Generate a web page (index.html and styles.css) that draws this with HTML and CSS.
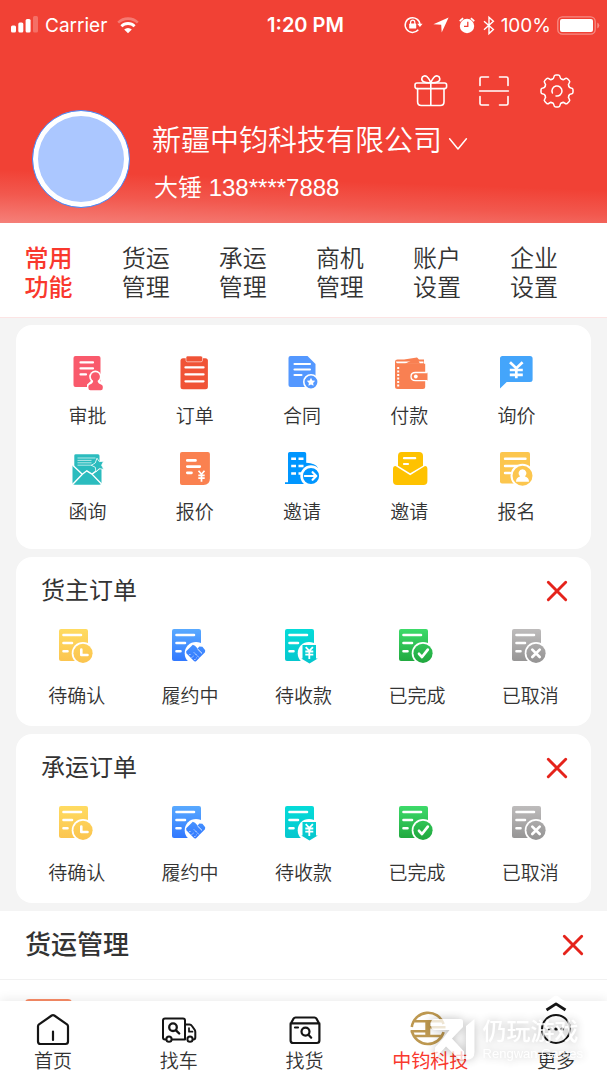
FILE: index.html
```html
<!DOCTYPE html>
<html lang="zh-CN">
<head>
<meta charset="utf-8">
<meta name="viewport" content="width=device-width, initial-scale=1">
<title>中钧科技</title>
<link rel="stylesheet" href="styles.css">
</head>
<body>
<svg class="sprite" aria-hidden="true">
  <defs>
    <linearGradient id="g-yellow" x1="0" y1="0" x2="0" y2="36" gradientUnits="userSpaceOnUse"><stop offset="0" stop-color="#ffdc62"/><stop offset="1" stop-color="#fbc34e"/></linearGradient>
    <linearGradient id="g-blue" x1="0" y1="0" x2="0" y2="36" gradientUnits="userSpaceOnUse"><stop offset="0" stop-color="#5aabff"/><stop offset="1" stop-color="#2e74ff"/></linearGradient>
    <linearGradient id="g-teal" x1="0" y1="0" x2="0" y2="36" gradientUnits="userSpaceOnUse"><stop offset="0" stop-color="#05dcd9"/><stop offset="1" stop-color="#06c5cd"/></linearGradient>
    <linearGradient id="g-green" x1="0" y1="0" x2="0" y2="36" gradientUnits="userSpaceOnUse"><stop offset="0" stop-color="#3edc6b"/><stop offset="1" stop-color="#1fa53c"/></linearGradient>
    <linearGradient id="g-gray" x1="0" y1="0" x2="0" y2="36" gradientUnits="userSpaceOnUse"><stop offset="0" stop-color="#bfbdbd"/><stop offset="1" stop-color="#939292"/></linearGradient>
  </defs>
  <symbol id="sheet" viewBox="1 0 36 36" overflow="visible">
    <rect x="1" y="1" width="29" height="32" rx="2"/>
    <path d="M5.5 7H23M5.5 15H14M5.5 23.3H9.5" stroke="#fff" stroke-width="2.6" stroke-linecap="round"/>
    <circle cx="25" cy="25.3" r="11.3" fill="#fff"/>
  </symbol>
  <symbol id="o-confirm" viewBox="1 0 36 36" overflow="visible">
    <g fill="url(#g-yellow)"><use href="#sheet" x="1" width="36" height="36"/><circle cx="25" cy="25.3" r="9.6"/></g>
    <path d="M23.3 21.5V27H29.5" fill="none" stroke="#fff" stroke-width="2.6" stroke-linecap="round" stroke-linejoin="round"/>
  </symbol>
  <symbol id="o-progress" viewBox="1 0 36 36" overflow="visible">
    <g fill="url(#g-blue)"><use href="#sheet" x="1" width="36" height="36"/>
    <path d="M15.2 23.3 21.8 16.8 24 17.8 26.6 20.6 28.4 18.6 31.4 18.8 34.2 22.3 34 24.3 24.8 33.6 23.2 33.3 15.3 25.2Z"/></g>
    <path d="M26.4 20.8 31 25.4" fill="none" stroke="#fff" stroke-width=".9"/>
    <path d="M18.3 27.1 19.7 25.7M20.8 29.6 22.6 27.8M23.3 32.1 25.5 29.9M23 24.5 28 29.5" fill="none" stroke="#fff" stroke-width=".9" stroke-dasharray="1.5 .7"/>
  </symbol>
  <symbol id="o-collect" viewBox="1 0 36 36" overflow="visible">
    <g fill="url(#g-teal)"><use href="#sheet" x="1" width="36" height="36"/>
    <path d="M18.5 17H32V30.5H33.8L25.5 35.5 17.2 30.5H18.5Z"/></g>
    <path d="M21.7 19.2 25.3 22.8 28.9 19.2M21.3 23.5H29.3M21.3 26.7H29.3M25.3 22.8V31" fill="none" stroke="#fff" stroke-width="1.8"/>
  </symbol>
  <symbol id="o-done" viewBox="1 0 36 36" overflow="visible">
    <g fill="url(#g-green)"><use href="#sheet" x="1" width="36" height="36"/><circle cx="25" cy="25.3" r="9.6"/></g>
    <path d="M21 25.8 24 29 29.8 21.6" fill="none" stroke="#fff" stroke-width="2.7" stroke-linecap="round" stroke-linejoin="round"/>
  </symbol>
  <symbol id="o-cancel" viewBox="1 0 36 36" overflow="visible">
    <g fill="url(#g-gray)"><use href="#sheet" x="1" width="36" height="36"/><circle cx="25" cy="25.3" r="9.6"/></g>
    <path d="M21.3 21.6 28.7 29M28.7 21.6 21.3 29" fill="none" stroke="#fff" stroke-width="2.7" stroke-linecap="round"/>
  </symbol>
  <symbol id="cross" viewBox="0 0 22 22">
    <path d="M2.3 2.3 19.7 19.7M19.7 2.3 2.3 19.7" fill="none" stroke="#e5231b" stroke-width="2.9" stroke-linecap="round"/>
  </symbol>
</svg>

<div class="app">
  <main class="scroll">
    <header class="hero">
      <div class="status">
        <div class="status-side">
          <svg class="ic-signal" viewBox="0 0 28 18" fill="#fff"><rect x="0" y="9.5" width="5" height="7" rx="1.5"/><rect x="7.3" y="6.5" width="5" height="10" rx="1.5"/><rect x="14.6" y="3" width="5" height="13.5" rx="1.5"/><rect x="22" y="0" width="5" height="16.5" rx="1.5" opacity=".25"/></svg>
          <span>Carrier</span>
          <svg class="ic-wifi" viewBox="0 0 22 17" fill="none" stroke="#fff"><path d="M1.2 5.6A14 14 0 0 1 20.8 5.6" stroke-width="2.6" opacity=".3"/><path d="M4.4 9.2A9.4 9.4 0 0 1 17.6 9.2" stroke-width="2.8"/><path d="M11 16.2 7.2 12.6A5.4 5.4 0 0 1 14.8 12.6Z" fill="#fff" stroke="none"/></svg>
        </div>
        <strong class="clock">1:20 PM</strong>
        <div class="status-side status-right">
          <svg class="ic-lock" viewBox="0 0 19 18" fill="none" stroke="#fff" stroke-width="1.5"><path d="M14.3 13.8A7.4 7.4 0 1 1 16 9"/><path d="M13.2 7.8H18.6L15.9 11Z" fill="#fff" stroke="none"/><rect x="5.2" y="7.6" width="7" height="5" rx=".6" fill="#fff" stroke="none"/><path d="M6.6 8V6.3A2.1 2.1 0 0 1 10.8 6.3V8" stroke-width="1.2"/></svg>
          <svg class="ic-loc" viewBox="0 0 16 16"><path d="M15.6.4 8.7 15.4 8.2 7.8.4 7.3Z" fill="#fff"/></svg>
          <svg class="ic-alarm" viewBox="0 0 16 17"><circle cx="8" cy="9" r="7.2" fill="#fff"/><path d="M.8 4.2A11 11 0 0 1 4.2 1.2M15.2 4.2A11 11 0 0 0 11.8 1.2" stroke="#fff" stroke-width="1.7" fill="none"/><path d="M8.8 4.8V9.4H5" stroke="#f14135" stroke-width="1.3" fill="none"/></svg>
          <svg class="ic-bt" viewBox="0 0 12 19"><path d="M1 5.2 10.4 13.6 6 17.6V1.3L10.4 5.3 1 13.8" fill="none" stroke="#fff" stroke-width="1.4"/></svg>
          <span>100%</span>
          <svg class="ic-battery" viewBox="0 0 43 19"><rect x=".8" y=".8" width="37.4" height="17.4" rx="4.6" fill="none" stroke="#fff" stroke-width="1.3" opacity=".4"/><rect x="3" y="3" width="33" height="13" rx="2" fill="#fff"/><path d="M40.3 6.5Q42.3 7.5 42.3 9.5T40.3 12.5Z" fill="#fff" opacity=".4"/></svg>
        </div>
      </div>

      <div class="tools">
        <button class="tool" type="button" aria-label="礼物"><svg viewBox="0 0 34 34" fill="none" stroke="#fff" stroke-width="1.6" stroke-linejoin="round" stroke-linecap="round"><rect x="1" y="9" width="31.6" height="5.6" rx="2"/><path d="M3.6 14.6V27.8Q3.6 31.5 7.3 31.5H26.3Q30 31.5 30 27.8V14.6M16.8 9V31.5M16.8 8.6C11.8 9.2 7.3 7.6 7.8 4.6 8.1 1.7 11.7 1 13.6 3.3 15.1 5 16.2 7 16.8 8.6ZM16.8 8.6C21.8 9.2 26.3 7.6 25.8 4.6 25.5 1.7 21.9 1 20 3.3 18.5 5 17.4 7 16.8 8.6Z"/></svg></button>
        <button class="tool" type="button" aria-label="扫一扫"><svg viewBox="0 0 34 34" fill="none" stroke="#fff" stroke-width="1.6" stroke-linecap="round" stroke-linejoin="round"><path d="M3 11.5V4.5Q3 3 4.5 3H11.5M22.5 3H29.5Q31 3 31 4.5V11.5M3 22.5V29.5Q3 31 4.5 31H11.5M22.5 31H29.5Q31 31 31 29.5V22.5M2.6 17H31.4"/></svg></button>
        <button class="tool" type="button" aria-label="设置"><svg viewBox="0 0 34 34" fill="none" stroke="#fff" stroke-width="1.5" stroke-linejoin="round" stroke-linecap="round"><path id="tooth" d="M12.1 5.2Q13.7 5 13.9 3 14.1 1 15.8 1H18.2Q19.9 1 20.1 3 20.3 5 21.9 5.2"/><use href="#tooth" transform="rotate(45 17 17)"/><use href="#tooth" transform="rotate(90 17 17)"/><use href="#tooth" transform="rotate(135 17 17)"/><use href="#tooth" transform="rotate(180 17 17)"/><use href="#tooth" transform="rotate(225 17 17)"/><use href="#tooth" transform="rotate(270 17 17)"/><use href="#tooth" transform="rotate(315 17 17)"/><path d="M12.4 19A5 5 0 1 1 16 21.9"/></svg></button>
      </div>

      <div class="profile">
        <div class="avatar"></div>
        <div class="who">
          <button class="company" type="button">新疆中钧科技有限公司<svg viewBox="0 0 20 14" fill="none" stroke="#fff" stroke-width="1.5" stroke-linecap="round" stroke-linejoin="round"><path d="M1.6 1.8 10 12 18.4 1.8"/></svg></button>
          <p class="phone">大锤 138****7888</p>
        </div>
      </div>
    </header>

    <nav class="tabs">
      <a class="tab active" href="#">常用<br>功能</a>
      <a class="tab" href="#">货运<br>管理</a>
      <a class="tab" href="#">承运<br>管理</a>
      <a class="tab" href="#">商机<br>管理</a>
      <a class="tab" href="#">账户<br>设置</a>
      <a class="tab" href="#">企业<br>设置</a>
    </nav>

    <div class="cards">
      <section class="card features">
        <a class="item" href="#"><svg viewBox="0 0 36 36"><rect x="3.5" y="1" width="27" height="31" rx="2" fill="#f95a6c"/><path d="M10.5 7.4H23M10.5 13.4H23M10.5 19.4H16" stroke="#fff" stroke-width="2.2" stroke-linecap="round"/><g fill="#fff"><circle cx="25.4" cy="21.8" r="6.2"/><path d="M22 25 17 29.5V36H34V29.5L29 25Z"/></g><g fill="#f95a6c"><circle cx="25.4" cy="21.8" r="4.5"/><path d="M23.3 24H27.5C27.3 26.5 28 28.5 30.5 29.2 32 29.6 32.8 30.6 32.8 32V33Q32.8 35.2 30.8 35.2H20.4Q18.4 35.2 18.4 33V32C18.4 30.6 19 29.6 20.5 29.2 22.8 28.5 23.5 26.5 23.3 24Z"/></g></svg>审批</a>
        <a class="item" href="#"><svg viewBox="0 0 36 36"><rect x="3.5" y="3.3" width="27.4" height="31" rx="2.5" fill="#f05336"/><rect x="9" y="1" width="16.5" height="5.8" rx="1.5" fill="#f05336" stroke="#fff" stroke-opacity=".7" stroke-width=".8"/><path d="M8.5 12.4H26.5M8.5 19.4H26.5M8.5 26.3H26.5" stroke="#fff" stroke-width="2.3" stroke-linecap="round"/></svg>订单</a>
        <a class="item" href="#"><svg viewBox="0 0 36 36"><path d="M6.5 1H23.5L31.5 9V32H6.5Q4.5 32 4.5 30V3Q4.5 1 6.5 1Z" fill="#5498ff"/><path d="M10.5 9H26M10.5 14.5H26M10.5 20H17.5" stroke="#fff" stroke-width="2.1" stroke-linecap="round"/><circle cx="27" cy="27" r="7.2" fill="#5498ff" stroke="#fff" stroke-width="1.6"/><path d="M27 22.8 28.3 25.4 31.2 25.8 29.1 27.9 29.6 30.8 27 29.4 24.4 30.8 24.9 27.9 22.8 25.8 25.7 25.4Z" fill="#fff"/></svg>合同</a>
        <a class="item" href="#"><svg viewBox="0 0 36 36"><path d="M4 6.8Q4 4.6 6.5 4.6H13L26 2.6 28 4.6H33V8.8H34.2V32Q34.2 34 32 34H6.5Q4 34 4 31.5Z" fill="#f98052"/><path d="M5 6.6H32.5V8.2H6.3Q5 8.2 5 6.6Z" fill="#fff"/><path d="M14 8.8 26 2.8 29 8.8Z" fill="#f98052"/><path d="M7.2 12V31.5" stroke="#fff" stroke-width="2" stroke-dasharray="2 1.5"/><path d="M36.5 17.5H24.5Q20 17.5 20 21.5T24.5 25.7H36.5" fill="#f98052" stroke="#fff" stroke-width="1.3"/><circle cx="24.8" cy="21.5" r="1.9" fill="#fff"/></svg>付款</a>
        <a class="item" href="#"><svg viewBox="0 0 36 36"><path d="M4.5 1H32Q34.6 1 34.6 3.5V24.5Q34.6 27 32 27H8.7L2 33.6V3.5Q2 1 4.5 1Z" fill="#44a5fb"/><path d="M12 7.2 18.3 13.2 24.6 7.2M11.8 15H24.8M11.8 19.8H24.8M18.3 13V23.2" fill="none" stroke="#fff" stroke-width="2.7"/></svg>询价</a>
        <a class="item" href="#"><svg viewBox="0 0 36 36"><path d="M4.3 4.5Q4.3 3.2 5.8 3.2H28Q29.5 3.2 29.5 4.7V16L31.5 15V31.7Q31.5 33.8 29.3 33.8H4.7Q2.5 33.8 2.5 31.7V14L4.3 15.7Z" fill="#2bbcbe"/><path d="M7.5 7H25.5M7.5 9.4H21.5M7.5 11.8H21.5M7.5 14.2H23.5" stroke="#fff" stroke-opacity=".65" stroke-width="1"/><path d="M2.5 14 12.3 23.2 3 33M31.5 16 22 23.2 31.5 33M12.3 23.2 16.8 19.8 22 23.2" fill="none" stroke="#fff" stroke-width="1.4"/><path d="M27 7.2 29.3 10.6 33.6 10.3 31.6 14.2 33.8 18.3 29.2 17.7 25.9 20.8 25.3 16.3 21.3 14.3 25.2 12Z" fill="#2bbcbe" stroke="#fff" stroke-width=".8"/></svg>函询</a>
        <a class="item" href="#"><svg viewBox="0 0 36 36"><path d="M5 1H30.9Q32.9 1 32.9 3V27.5Q32.9 34 26.5 34H5Q3 34 3 32V3Q3 1 5 1Z" fill="#fa8150"/><path d="M10.3 9.4H18.5M10.3 15.6H22.8M10.3 21.8H14.5" stroke="#fff" stroke-width="2.7" stroke-linecap="round"/><path d="M21.5 19.8 24.5 23.2 27.5 19.8M21.3 24.4H27.7M21.3 27.2H27.7M24.5 23.2V30.7" fill="none" stroke="#fff" stroke-width="1.7"/></svg>报价</a>
        <a class="item" href="#"><svg viewBox="0 0 36 36"><path d="M5.7 1H20.5Q22.2 1 22.2 2.7V11.8Q31.5 12 34 17V33H1V31.3H4V2.7Q4 1 5.7 1Z" fill="#0096ff"/><path d="M7.2 7.7H12M14.5 7.7H19.5M7.2 15H12M14.5 15H19.5M7.2 22.5H12M14.5 22.5H19.5" stroke="#fff" stroke-width="2.5"/><circle cx="27" cy="25" r="9.4" fill="#0096ff" stroke="#fff" stroke-width="2.6"/><path d="M20.8 25H32M28.6 21.2 32.3 25 28.6 28.8" fill="none" stroke="#fff" stroke-width="2.2" stroke-linecap="round" stroke-linejoin="round"/></svg>邀请</a>
        <a class="item" href="#"><svg viewBox="0 0 36 36" fill="#fec200"><path d="M10.5 1H28Q32 1 32 5V14.8L19.2 22.2 7 14.8V5Q7 1 10.5 1Z"/><path d="M2 18Q2 15 4.5 15L19.2 24.3 34 15Q36.4 15 36.4 18V30Q36.4 34 32.4 34H6Q2 34 2 30Z"/><path d="M13 7.2H24.2M13 13H17" stroke="#fff" stroke-width="2.2" stroke-linecap="round"/></svg>邀请</a>
        <a class="item" href="#"><svg viewBox="0 0 36 36"><rect x="2" y="1" width="30" height="31.5" rx="2" fill="#fcc64e"/><path d="M7 7.7H27.5M7 15H20M7 22H12" stroke="#fff" stroke-width="2.4" stroke-linecap="round"/><circle cx="24.5" cy="24.8" r="11" fill="#fcc64e" stroke="#fff" stroke-width="2"/><path d="M24.5 18.3A4 4 0 0 0 22 25.4C19.5 26 18 27.6 18 30.8H31C31 27.6 29.5 26 27 25.4A4 4 0 0 0 24.5 18.3Z" fill="#fff"/></svg>报名</a>
      </section>

      <section class="card">
        <div class="card-head"><h2>货主订单</h2><button class="close" type="button" aria-label="关闭"><svg><use href="#cross"/></svg></button></div>
        <div class="orders">
          <a class="item" href="#"><svg><use href="#o-confirm"/></svg>待确认</a>
          <a class="item" href="#"><svg><use href="#o-progress"/></svg>履约中</a>
          <a class="item" href="#"><svg><use href="#o-collect"/></svg>待收款</a>
          <a class="item" href="#"><svg><use href="#o-done"/></svg>已完成</a>
          <a class="item" href="#"><svg><use href="#o-cancel"/></svg>已取消</a>
        </div>
      </section>

      <section class="card">
        <div class="card-head"><h2>承运订单</h2><button class="close" type="button" aria-label="关闭"><svg><use href="#cross"/></svg></button></div>
        <div class="orders">
          <a class="item" href="#"><svg><use href="#o-confirm"/></svg>待确认</a>
          <a class="item" href="#"><svg><use href="#o-progress"/></svg>履约中</a>
          <a class="item" href="#"><svg><use href="#o-collect"/></svg>待收款</a>
          <a class="item" href="#"><svg><use href="#o-done"/></svg>已完成</a>
          <a class="item" href="#"><svg><use href="#o-cancel"/></svg>已取消</a>
        </div>
      </section>
    </div>

    <section class="freight">
      <div class="freight-head"><h2>货运管理</h2><button class="close" type="button" aria-label="关闭"><svg><use href="#cross"/></svg></button></div>
      <div class="freight-body"><div class="tile"></div></div>
    </section>
  </main>

  <nav class="bottom">
    <a class="nav-item" href="#"><svg viewBox="0 0 36 36" fill="none" stroke="#151515" stroke-width="2.2" stroke-linejoin="round" stroke-linecap="round"><path d="M3 14.2Q3 13.2 4 12.4L16.7 3.5Q18 2.6 19.3 3.5L32 12.4Q33 13.2 33 14.2V29.5Q33 32 30.5 32H5.5Q3 32 3 29.5ZM18 19.5V28"/></svg>首页</a>
    <a class="nav-item" href="#"><svg viewBox="0 0 36 36" fill="none" stroke="#151515" stroke-width="2" stroke-linejoin="round" stroke-linecap="round"><path d="M4.8 27.4H4Q2 27.4 2 25.4V8.5Q2 6.5 4 6.5H22Q24 6.5 24 8.5V27.4H11M24 12.5H28.5Q30 12.5 31 14L33.8 18Q34.3 18.8 34.3 20V25.4Q34.3 27.4 32.3 27.4"/><circle cx="8" cy="27.2" r="2.6"/><circle cx="29" cy="27.2" r="2.6"/><circle cx="12" cy="15.2" r="3.8" stroke-width="2.3"/><path d="M15 18.3 18.2 21.5" stroke-width="2.4"/><path d="M28 16V19.7H31.5" stroke-width="1.7"/></svg>找车</a>
    <a class="nav-item" href="#"><svg viewBox="0 0 36 36" fill="none" stroke="#151515" stroke-width="2.2" stroke-linejoin="round" stroke-linecap="round"><path d="M3.6 12 6.6 6.5Q7.2 5.5 8.5 5.5H27.5Q28.8 5.5 29.4 6.5L32.4 12V28.5Q32.4 31 29.9 31H6.1Q3.6 31 3.6 28.5ZM3.6 11.3H32.4M8 15.5H11"/><circle cx="18.5" cy="19.6" r="4"/><path d="M21.4 22.7 24.2 25.7"/></svg>找货</a>
    <a class="nav-item current" href="#"><svg viewBox="0 0 36 36" fill="none" stroke="#bd9850" stroke-width="2.6"><path d="M-.2 15A16.4 16.4 0 0 1 31.6 12M-.1 19.3A16.4 16.4 0 0 0 31.6 20.2"/><path d="M2.5 9.3H30M15.8 9.3V24M15.8 15.2H33.5M-1.4 19.3H15.8M2.5 24H30"/><path d="M15.8 10V23.5" stroke-width="5"/></svg>中钧科技</a>
    <a class="nav-item" href="#"><svg viewBox="0 0 36 36" fill="none" stroke="#151515" stroke-width="2" stroke-linecap="round" stroke-linejoin="round"><path d="M5-9.5Q12-12 15-15 18-17.5 21-15 24-12 31-9.5Z" fill="#fff" stroke="none"/><circle cx="18" cy="17" r="14"/><path d="M8.5-2 18-8.2 27.5-2" stroke-width="2.8" stroke-linecap="butt"/><path d="M11.5 17H12.2M17.8 17H18.5M24 17H24.6" stroke-width="3"/></svg>更多</a>
    <div class="watermark" aria-hidden="true">
      <svg viewBox="0 0 46 42"><path d="M4 0H29.5Q32 0 32 3V8L21 19.5 33 32.5V41H29L15 27.5 4 39.5V28.5L12 19.5 18.5 11H4Q0 11 0 6V4Q0 0 4 0ZM35 7 43.5 0V33Q43.5 41 35 41Z" fill="#fff"/></svg>
      <div class="wm-text"><span class="wm-cn">仍玩游戏</span><span class="wm-en">Rengwan Games</span></div>
    </div>
  </nav>
</div>
</body>
</html>
```
FILE: styles.css
```css
* {
  box-sizing: border-box;
}

body {
  margin: 0;
  font-family: "Liberation Sans", "Noto Sans CJK SC", sans-serif;
  font-weight: 350;
  color: #333;
  background: #f4f4f4;
}

h2,
p {
  margin: 0;
}

a {
  color: inherit;
  text-decoration: none;
}

button {
  padding: 0;
  border: 0;
  background: none;
  color: inherit;
  font: inherit;
}

svg {
  display: block;
  flex: none;
  overflow: visible;
}

.sprite {
  position: absolute;
  width: 0;
  height: 0;
}

.app {
  display: flex;
  flex-direction: column;
  height: 100vh;
}

.scroll {
  flex: 1;
  min-height: 0;
  overflow-x: hidden;
  overflow-y: auto;
  scrollbar-width: none;
}

/* Header */
.hero {
  padding-bottom: 15px;
  color: #fff;
  background: linear-gradient(182deg, #f14135 78%, #f2584e 88%, #f58079 100%);
}

.status {
  display: grid;
  grid-template-columns: 1fr auto 1fr;
  align-items: center;
  height: 50px;
  padding: 0 7px 0 11px;
  font-family: Inter, sans-serif;
  font-size: 19px;
  font-weight: 400;
}

.status-side {
  display: flex;
  align-items: center;
  gap: 6px;
}

.status-right {
  justify-content: flex-end;
}

.clock {
  font-size: 20px;
  font-weight: 600;
}

.ic-signal {
  width: 28px;
  height: 18px;
}

.ic-wifi {
  width: 22px;
  height: 17px;
  margin-left: 4px;
}

.ic-lock {
  width: 19px;
  height: 18px;
}

.ic-loc {
  width: 16px;
  height: 16px;
  margin-left: 4px;
}

.ic-alarm {
  width: 16px;
  height: 17px;
  margin-left: 4px;
}

.ic-bt {
  width: 12px;
  height: 19px;
  margin-left: 2px;
}

.ic-battery {
  width: 43px;
  height: 19px;
}

.tools {
  display: flex;
  justify-content: flex-end;
  gap: 29px;
  height: 60px;
  padding: 24px 33px 0 0;
}

.tool,
.tool svg {
  width: 34px;
  height: 34px;
}

.profile {
  display: flex;
  gap: 22px;
  padding: 0 32px;
}

.avatar {
  flex: none;
  width: 98px;
  height: 98px;
  border: 1px solid #4a87f5;
  border-radius: 50%;
  background: #abc7ff;
  box-shadow: inset 0 0 0 5px #fff;
}

.who {
  padding-top: 11px;
}

.company {
  display: flex;
  align-items: center;
  gap: 6px;
  font-size: 29px;
  line-height: 40px;
  white-space: nowrap;
}

.company svg {
  width: 20px;
  height: 14px;
  margin-top: 5px;
}

.phone {
  padding: 11px 0 0 2px;
  font-size: 24px;
  line-height: 32px;
}

/* Category tabs */
.tabs {
  display: flex;
  border-bottom: 1px solid #fce4e4;
  background: #fff;
}

.tab {
  flex: 0 0 16%;
  padding: 21px 0 15px;
  font-size: 24px;
  line-height: 29px;
  text-align: center;
}

.active {
  color: #f9382d;
  font-weight: 500;
}

/* Cards */
.cards {
  display: flex;
  flex-direction: column;
  gap: 8px;
  padding: 7px 16px 8px;
}

.card {
  border-radius: 16px;
  background: #fff;
}

.features {
  display: grid;
  grid-template-columns: repeat(5, 1fr);
  row-gap: 20px;
  padding: 30px 21px 22px 18px;
}

.item {
  display: flex;
  flex-direction: column;
  align-items: center;
  gap: 12px;
  font-size: 19px;
  line-height: 28px;
}

.item svg {
  width: 36px;
  height: 36px;
}

.card-head {
  display: flex;
  align-items: center;
  justify-content: space-between;
  padding: 16px 23px 0 25px;
}

h2 {
  font-size: 24px;
  font-weight: 400;
  line-height: 36px;
}

.close,
.close svg {
  width: 22px;
  height: 22px;
}

.orders {
  display: grid;
  grid-template-columns: repeat(5, 1fr);
  padding: 19px 4px 15px;
}

.orders .item {
  gap: 19px;
}

/* Freight section */
.freight {
  background: #fff;
}

.freight-head {
  display: flex;
  align-items: center;
  justify-content: space-between;
  padding: 16px 23px 16px 25px;
  border-bottom: 1px solid #f1f1f1;
}

.freight-head h2 {
  font-size: 26px;
  font-weight: 500;
}

.freight-body {
  padding: 19px 25px;
}

.tile {
  width: 47px;
  height: 47px;
  border-radius: 4px;
  background: #fa8c66;
}

/* Bottom navigation */
.bottom {
  position: relative;
  display: flex;
  justify-content: space-between;
  padding: 11px 32px 5px 34px;
  background: #fff;
  box-shadow: 0 -2px 10px rgba(0, 0, 0, 0.08);
}

.nav-item {
  display: flex;
  flex-direction: column;
  align-items: center;
  width: 38px;
  font-size: 19px;
  line-height: 27px;
  white-space: nowrap;
}

.nav-item svg {
  width: 36px;
  height: 36px;
}

.current {
  color: #f9382d;
  font-weight: 400;
}

.watermark {
  position: absolute;
  right: 24px;
  bottom: 18px;
  display: flex;
  align-items: center;
  gap: 6px;
  color: #fff;
  opacity: 0.75;
  filter: drop-shadow(0 0 5px rgba(0, 0, 0, 0.35));
  pointer-events: none;
}

.watermark svg {
  width: 46px;
  height: 42px;
}

.wm-text {
  display: flex;
  flex-direction: column;
}

.wm-cn {
  font-size: 24px;
  font-weight: 500;
  line-height: 27px;
}

.wm-en {
  font-size: 13px;
  line-height: 17px;
}
```
